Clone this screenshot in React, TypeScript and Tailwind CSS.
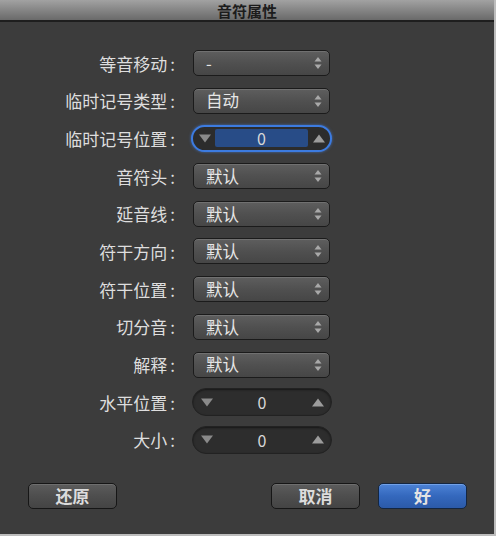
import type { ReactNode } from 'react';

const FONT = { fontFamily: '"Noto Sans CJK SC", "Noto Sans", sans-serif' };

interface PopupProps {
  value: string;
}

function Popup({ value }: PopupProps) {
  return (
    <div className="relative flex h-[26px] w-[137px] items-center rounded-[5px] border border-[#1b1b1b] bg-gradient-to-b from-[#5e5e5e] via-[#505050] to-[#464646] pl-[12px] shadow-[inset_0_1px_0_rgba(255,255,255,0.12)]">
      <span className="text-[16.5px] leading-none text-[#e6e6e6]">{value}</span>
      <svg
        className="absolute right-[7px] top-1/2 -translate-y-1/2"
        width="8"
        height="13"
        viewBox="0 0 8 13"
      >
        <path d="M4 0.5 L7.5 5 L0.5 5 Z" fill="#a9a9a9" />
        <path d="M4 12.5 L7.5 8 L0.5 8 Z" fill="#a9a9a9" />
      </svg>
    </div>
  );
}

function TriDown() {
  return (
    <svg width="12" height="9" viewBox="0 0 12 9">
      <path d="M0 0.5 L12 0.5 L6 8.5 Z" fill="#8a8a8a" />
    </svg>
  );
}

function TriUp() {
  return (
    <svg width="12" height="9" viewBox="0 0 12 9">
      <path d="M0 8.5 L12 8.5 L6 0.5 Z" fill="#9c9c9c" />
    </svg>
  );
}

interface StepperProps {
  value: string;
  focused?: boolean;
}

function Stepper({ value, focused }: StepperProps) {
  if (focused) {
    return (
      <div className="-ml-[2px] flex h-[27px] w-[141px] items-center rounded-full border-[2.5px] border-[#3c7be0] bg-[#2c2c2c] shadow-[0_0_3px_rgba(70,130,230,0.7)]">
        <div className="flex w-[22px] justify-center pl-[2px]">
          <TriDown />
        </div>
        <div className="flex h-[18px] flex-1 items-center justify-center rounded-[2px] bg-[#284c87]">
          <span className="text-[16px] leading-none text-[#d8d8d8]">{value}</span>
        </div>
        <div className="flex w-[22px] justify-center pr-[1px]">
          <TriUp />
        </div>
      </div>
    );
  }
  return (
    <div className="-ml-[1px] flex h-[28px] w-[140px] items-center rounded-full border border-[#222] bg-[#2d2d2d] shadow-[inset_0_1px_2px_rgba(0,0,0,0.5)]">
      <div className="flex w-[26px] justify-center pl-[1px]">
        <TriDown />
      </div>
      <div className="flex flex-1 justify-center">
        <span className="text-[16px] leading-none text-[#d8d8d8]">{value}</span>
      </div>
      <div className="flex w-[26px] justify-center">
        <TriUp />
      </div>
    </div>
  );
}

interface RowProps {
  label: string;
  children: ReactNode;
}

function Row({ label, children }: RowProps) {
  return (
    <div className="flex h-[26px] items-center">
      <span className="w-[175px] text-right text-[17px] leading-none text-[#dedede]">
        {label}
        <span className="ml-[3px]">:</span>
      </span>
      <div className="ml-[18px]">{children}</div>
    </div>
  );
}

interface ButtonProps {
  label: string;
  primary?: boolean;
}

function DialogButton({ label, primary }: ButtonProps) {
  return (
    <button
      className={
        primary
          ? 'flex h-[26px] w-[89px] items-center justify-center rounded-[5px] border border-[#142640] bg-gradient-to-b from-[#4d83d6] via-[#3468bd] to-[#2b5aa9] text-[17px] font-bold leading-none text-[#e4e4e4] shadow-[inset_0_1px_0_rgba(160,200,255,0.45)]'
          : 'flex h-[26px] w-[89px] items-center justify-center rounded-[5px] border border-[#161616] bg-gradient-to-b from-[#5c5c5c] via-[#4e4e4e] to-[#444] text-[17px] font-bold leading-none text-[#dcdcdc] shadow-[inset_0_1px_0_rgba(255,255,255,0.12)]'
      }
    >
      {label}
    </button>
  );
}

const POPUPS_TOP = [
  { label: '等音移动', value: '-' },
  { label: '临时记号类型', value: '自动' },
];

const POPUPS_MID = [
  { label: '音符头', value: '默认' },
  { label: '延音线', value: '默认' },
  { label: '符干方向', value: '默认' },
  { label: '符干位置', value: '默认' },
  { label: '切分音', value: '默认' },
  { label: '解释', value: '默认' },
];

export default function App() {
  return (
    <div
      className="flex h-[536px] w-[496px] flex-col border-b-2 border-r-2 border-[#bdbdbd] bg-[#3c3c3c]"
      style={FONT}
    >
      <div className="flex h-[22px] shrink-0 items-center justify-center border-b-2 border-[#1e1e1e] bg-gradient-to-b from-[#a2a2a2] to-[#6a6a6a]">
        <span className="text-[15px] font-bold leading-none text-[#1c1c1c]">音符属性</span>
      </div>

      <div className="mt-[28px] flex flex-col gap-[11.7px]">
        {POPUPS_TOP.map((p) => (
          <Row key={p.label} label={p.label}>
            <Popup value={p.value} />
          </Row>
        ))}
        <Row label="临时记号位置">
          <Stepper value="0" focused />
        </Row>
        {POPUPS_MID.map((p) => (
          <Row key={p.label} label={p.label}>
            <Popup value={p.value} />
          </Row>
        ))}
        <Row label="水平位置">
          <Stepper value="0" />
        </Row>
        <Row label="大小">
          <Stepper value="0" />
        </Row>
      </div>

      <div className="mt-[30px] flex items-center pl-[28px] pr-[27px]">
        <DialogButton label="还原" />
        <div className="flex-1" />
        <DialogButton label="取消" />
        <div className="w-[18px]" />
        <DialogButton label="好" primary />
      </div>
    </div>
  );
}
